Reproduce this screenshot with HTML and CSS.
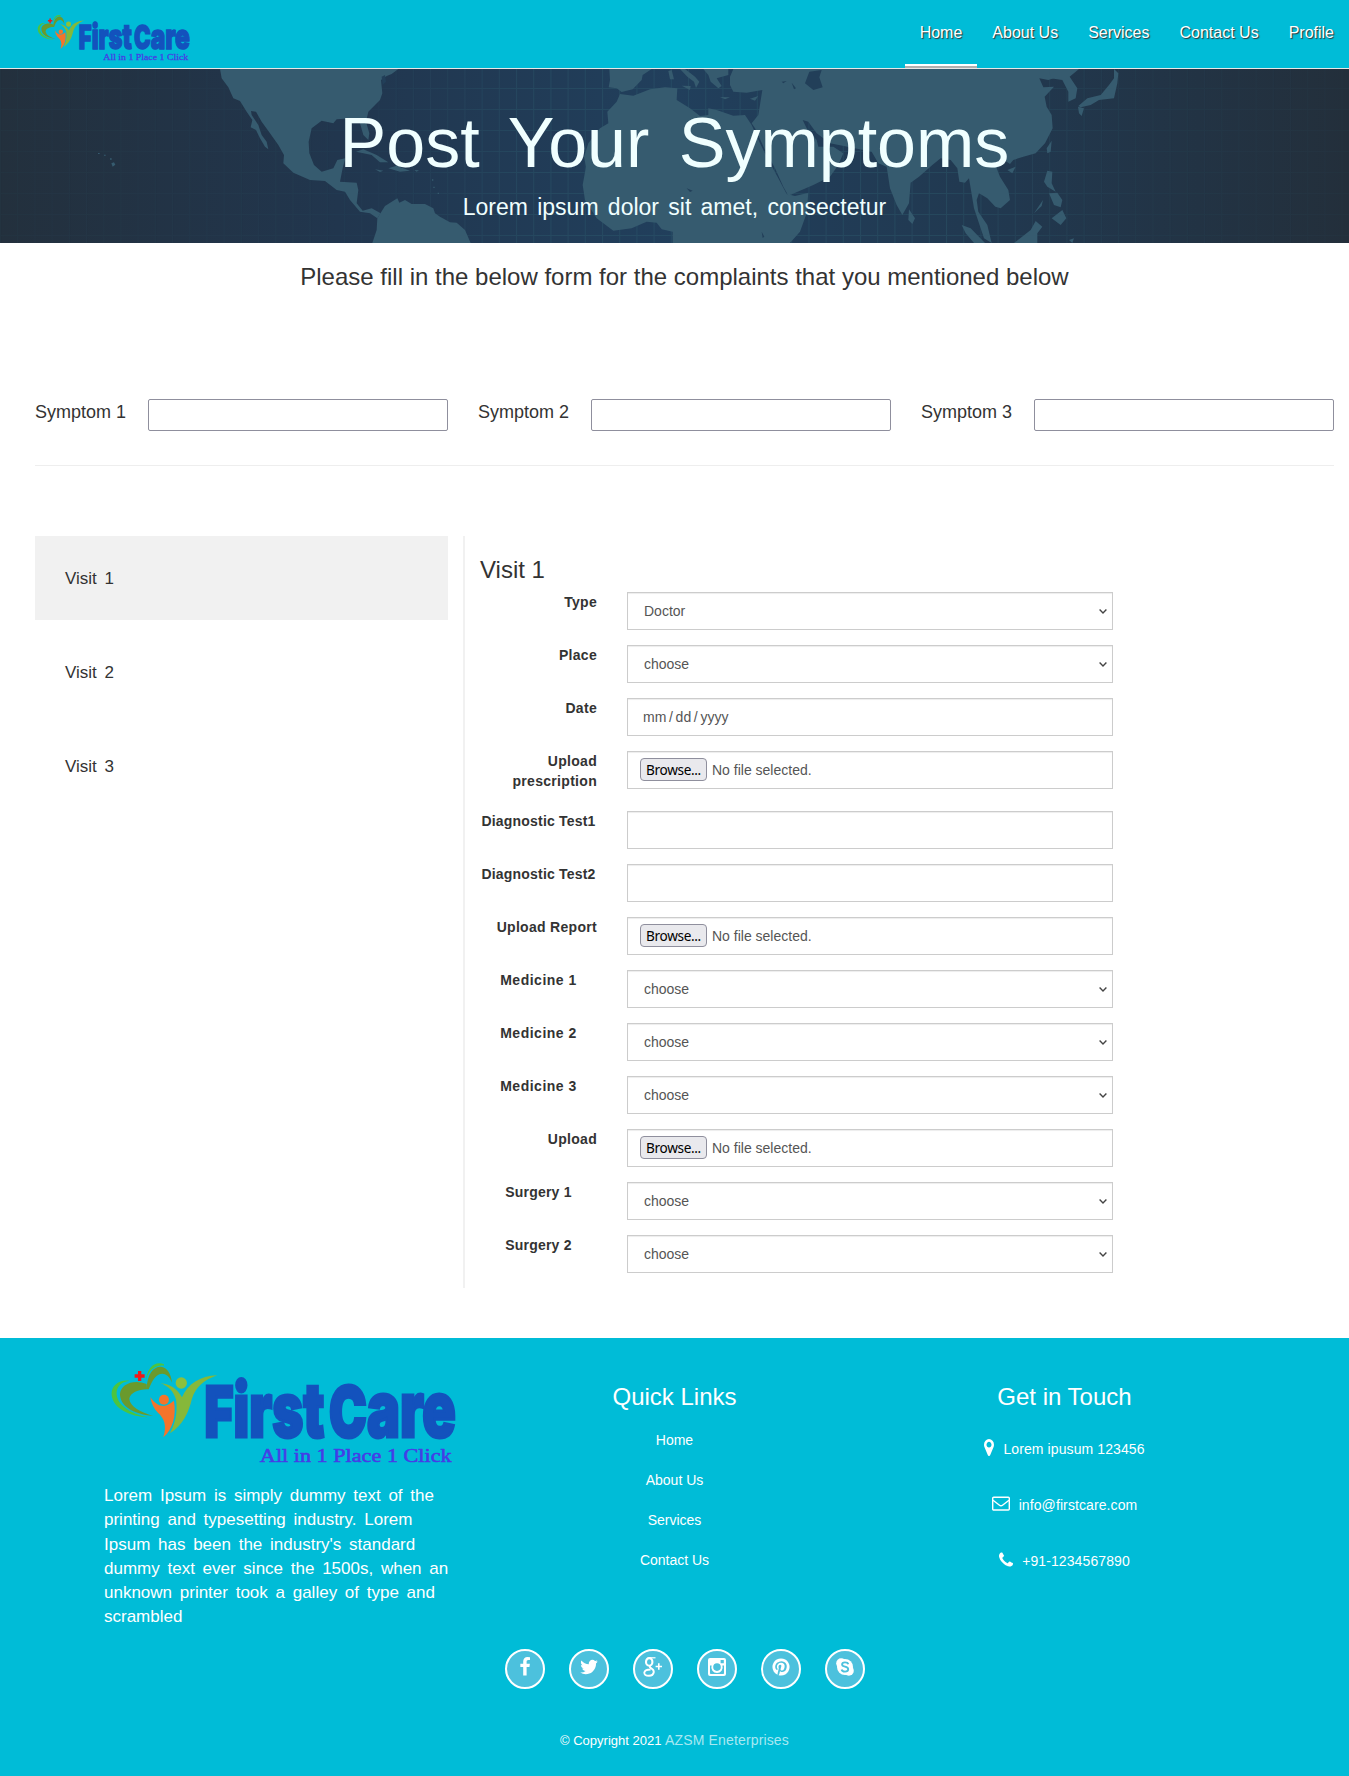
FILE: index.html
```html
<!DOCTYPE html>
<html lang="en">
<head>
<meta charset="utf-8">
<title>FirstCare - Post Your Symptoms</title>
<link rel="stylesheet" href="styles.css">
</head>
<body>
<svg class="defs" width="0" height="0" aria-hidden="true">
  <symbol id="logo" viewBox="60 35 1045 315" preserveAspectRatio="none">
    <path fill="#4cc43f" d="M222 45C195 34 172 55 168 92C176 62 196 46 222 49ZM118 94C84 90 62 112 65 138C70 178 120 202 174 204C120 192 84 168 80 136C78 114 92 98 118 94Z"/>
    <path fill="#6a9a2d" d="M170 118C172 74 190 52 212 52C232 53 244 74 246 100C234 72 216 68 200 80C186 92 182 108 176 120C150 118 120 130 118 148C120 172 152 188 190 200C126 194 90 168 90 134C92 104 132 88 170 104Z"/>
    <path fill="#86b83a" d="M212 102C240 104 262 118 276 144C294 104 330 80 382 78C340 92 318 114 306 148C296 190 280 226 240 252C262 210 262 176 258 150C250 124 234 110 212 102Z"/>
    <circle cx="274" cy="101" r="17" fill="#8cc03c"/>
    <path fill="#f4742b" d="M181 143C192 160 206 170 222 170C234 168 244 160 252 154C260 200 248 240 220 264C232 228 222 206 204 190C192 178 184 162 181 143Z"/>
    <circle cx="222" cy="151" r="15" fill="#f4742b"/>
    <path fill="#f01818" d="M144 65h10v10h10v10h-10v10h-10v-10h-10v-10h10z"/>
    <g class="logo-name">
      <text x="344" y="264" textLength="360" lengthAdjust="spacingAndGlyphs"><tspan font-size="212">F</tspan><tspan font-size="226">irst</tspan></text>
      <text x="718" y="264" textLength="380" lengthAdjust="spacingAndGlyphs"><tspan font-size="212">C</tspan><tspan font-size="232">are</tspan></text>
    </g>
    <text class="logo-tag" x="510" y="338" font-size="58" textLength="576" lengthAdjust="spacingAndGlyphs">All in 1 Place 1 Click</text>
  </symbol>
  <symbol id="chevron" viewBox="0 0 8 5"><path d="M0.6 0.6L4 4L7.4 0.6" fill="none" stroke="#444" stroke-width="1.4"/></symbol>
</svg>

<header class="topbar">
  <svg class="topbar-logo"><use href="#logo"/></svg>
  <nav class="nav">
    <a class="active">Home</a><a>About Us</a><a>Services</a><a>Contact Us</a><a>Profile</a>
  </nav>
</header>

<section class="banner">
  <svg class="map" viewBox="0 69 1349 174" preserveAspectRatio="none" aria-hidden="true">
    <defs>
      <linearGradient id="sea" x1="0" x2="1" y1="0" y2="0">
        <stop offset="0" stop-color="#23303d"/><stop offset=".25" stop-color="#21364e"/><stop offset=".5" stop-color="#213f5c"/><stop offset=".75" stop-color="#21384f"/><stop offset="1" stop-color="#232f3b"/>
      </linearGradient>
      <pattern id="grid" width="17.2" height="21" y="4" patternUnits="userSpaceOnUse">
        <path d="M.5 0V21M0 .5H17.2" stroke="#2e6273" stroke-opacity=".36"/>
      </pattern>
      <linearGradient id="fade" x1="0" x2="1" y1="0" y2="0">
        <stop offset="0" stop-color="#333"/><stop offset=".28" stop-color="#444"/><stop offset=".4" stop-color="#fff"/><stop offset=".7" stop-color="#fff"/><stop offset=".85" stop-color="#444"/><stop offset="1" stop-color="#333"/>
      </linearGradient>
      <mask id="gridMask"><rect y="69" width="1349" height="174" fill="url(#fade)"/></mask>
    </defs>
    <rect y="69" width="1349" height="174" fill="url(#sea)"/>
    <rect y="69" width="1349" height="174" fill="url(#grid)" mask="url(#gridMask)"/>
    <g fill="#365b6f">
      <g transform="scale(.33333)">
        <path d="M660 207L665 235L685 262L700 295L720 303L740 335L757 360L752 382L768 390L780 415L795 440L805 448L800 425L785 405L775 375L755 345L753 333L768 335L785 365L810 400L835 435L852 465L850 490L880 518L930 540L975 543L1010 570L1035 575L1050 600L1080 635L1110 640L1132 655L1142 640L1115 625L1088 632L1070 610L1075 570L1070 548L1020 545L1028 505L1036 475L1012 480L1000 505L965 515L942 495L928 460L926 425L935 385L965 362L1000 370L1010 358L1060 355L1080 370L1090 405L1105 420L1108 400L1098 365L1105 335L1140 300L1147 280L1143 240L1160 228L1175 222L1195 207Z"/>
        <path d="M1132 655L1155 618L1192 595L1198 608L1215 600L1235 612L1275 612L1300 625L1305 640L1320 650L1350 667L1370 668L1395 690L1412 729L1117 729L1130 690Z"/>
        <path d="M1068 455L1090 448L1130 465L1165 487L1140 487L1115 465L1090 460ZM1165 505L1190 497L1230 512L1200 515ZM1125 508L1150 512L1140 516ZM1243 510L1257 511L1250 515Z"/>
        <path d="M334 490L342 487L346 494L338 500ZM294 459h5v3h-5zM312 464h5v3h-5zM330 475h5v4h-5zM1296 538h4v4h-4zM1300 560h4v4h-4zM1313 578h4v4h-4z"/>
      </g>
      <g transform="translate(450 0) scale(.33333)">
        <path d="M478 207L480 240L476 262L500 265L515 276L548 268L575 240L578 225L605 207ZM690 207L712 230L732 245L738 264L748 245L735 230L705 207ZM760 207L775 225L782 245L805 265L815 258L800 235L835 225L835 207ZM695 257L722 258L720 270ZM655 213L665 210L672 238L660 238ZM810 291L840 292L825 298ZM900 296L925 288L915 302Z"/>
        <path d="M510 282L550 287L600 268L645 262L682 265L680 300L720 325L750 348L775 345L775 325L800 330L850 347L885 345L905 375L930 430L955 480L985 535L1010 582L1035 588L1075 578L1070 640L1050 695L1020 729L668 729L668 695L635 688L620 668L590 665L545 685L490 692L440 655L405 600L398 555L408 500L402 470L415 430L450 385L475 370L472 335L500 305Z"/>
        <path d="M840 230L850 207L1850 207L1820 232L1795 240L1768 235L1780 262L1812 260L1784 290L1790 320L1805 345L1808 385L1785 430L1757 460L1720 470L1690 480L1680 492L1662 480L1640 505L1650 530L1675 570L1680 600L1652 625L1636 620L1612 595L1587 580L1580 600L1585 635L1612 675L1625 729L1602 715L1587 670L1572 625L1557 535L1545 548L1528 545L1522 505L1502 480L1472 475L1447 495L1407 530L1382 548L1377 610L1357 645L1340 615L1320 565L1310 500L1285 490L1265 455L1200 442L1140 430L1100 400L1075 365L1058 360L1070 385L1100 420L1105 440L1150 440L1180 460L1165 495L1140 530L1090 555L1015 587L1000 560L975 505L945 450L915 385L905 370L925 345L937 270L890 278L850 275L840 255Z"/>
      </g>
      <g transform="translate(899 0) scale(.33333)">
        <path d="M450 207L540 207L512 230L535 265L530 295L508 305L508 275L490 240L455 235ZM645 207L658 220L655 250L645 295L600 300L575 315L545 322L538 318L565 295L605 285L630 255L645 235ZM537 320L555 325L548 348L540 340ZM458 422L455 455L445 460L443 445ZM445 512L460 515L458 550L470 575L445 560L435 545ZM458 655L490 630L502 655L485 675ZM450 580L475 578L490 600L485 622L465 615ZM325 510L350 500L340 520ZM345 729L395 690L410 663L430 680L415 700L415 729ZM188 675L215 685L258 729L225 729L200 700ZM30 628L48 655L40 672L28 660ZM405 640L432 600L428 618ZM510 720L525 715L520 729Z"/>
      </g>
    </g>
    <g fill="#223f59" transform="translate(450 0) scale(.33333)">
      <path d="M1078 215L1115 210L1108 232L1118 262L1090 270L1065 250ZM1025 248L1038 265L1032 268ZM995 245L1010 243L1000 250ZM710 565L728 572L720 576ZM935 695L943 710L938 714Z"/>
    </g>
    <g fill="#223f59" transform="scale(.33333)"><path d="M1145 230L1155 225L1158 245L1148 255Z"/></g>
  </svg>
  <div class="banner-text">
    <h1>Post Your Symptoms</h1>
    <p>Lorem ipsum dolor sit amet, consectetur</p>
  </div>
</section>

<main>
  <h2 class="intro">Please fill in the below form for the complaints that you mentioned below</h2>
  <div class="symptoms">
    <label class="symptom"><span>Symptom 1</span><input type="text"></label>
    <label class="symptom"><span>Symptom 2</span><input type="text"></label>
    <label class="symptom"><span>Symptom 3</span><input type="text"></label>
  </div>

  <div class="visits">
    <div class="tabs"><a class="active">Visit 1</a><a>Visit 2</a><a>Visit 3</a></div>
    <form class="visit">
      <h3>Visit 1</h3>
      <div class="row"><label>Type</label><div class="field"><select><option>Doctor</option></select><svg class="arrow"><use href="#chevron"/></svg></div></div>
      <div class="row"><label>Place</label><div class="field"><select><option>choose</option></select><svg class="arrow"><use href="#chevron"/></svg></div></div>
      <div class="row"><label>Date</label><div class="field date"><span>mm / dd / yyyy</span></div></div>
      <div class="row"><label>Upload prescription</label><div class="field file"><span class="browse">Browse...</span><span>No file selected.</span></div></div>
      <div class="row"><label class="mid">Diagnostic Test1</label><div class="field"></div></div>
      <div class="row"><label class="mid">Diagnostic Test2</label><div class="field"></div></div>
      <div class="row"><label>Upload Report</label><div class="field file"><span class="browse">Browse...</span><span>No file selected.</span></div></div>
      <div class="row"><label class="mid wide">Medicine 1</label><div class="field"><select><option>choose</option></select><svg class="arrow"><use href="#chevron"/></svg></div></div>
      <div class="row"><label class="mid wide">Medicine 2</label><div class="field"><select><option>choose</option></select><svg class="arrow"><use href="#chevron"/></svg></div></div>
      <div class="row"><label class="mid wide">Medicine 3</label><div class="field"><select><option>choose</option></select><svg class="arrow"><use href="#chevron"/></svg></div></div>
      <div class="row"><label>Upload</label><div class="field file"><span class="browse">Browse...</span><span>No file selected.</span></div></div>
      <div class="row"><label class="mid">Surgery 1</label><div class="field"><select><option>choose</option></select><svg class="arrow"><use href="#chevron"/></svg></div></div>
      <div class="row"><label class="mid">Surgery 2</label><div class="field"><select><option>choose</option></select><svg class="arrow"><use href="#chevron"/></svg></div></div>
    </form>
  </div>
</main>

<footer>
  <div class="foot-cols">
    <div class="about">
      <svg class="foot-logo"><use href="#logo"/></svg>
      <p>Lorem Ipsum is simply dummy text of the printing and typesetting industry. Lorem Ipsum has been the industry's standard dummy text ever since the 1500s, when an unknown printer took a galley of type and scrambled</p>
    </div>
    <div class="links">
      <h3>Quick Links</h3>
      <a>Home</a><a>About Us</a><a>Services</a><a>Contact Us</a>
    </div>
    <div class="touch">
      <h3>Get in Touch</h3>
      <p><svg width="10" height="17" viewBox="384 128 1024 1536" preserveAspectRatio="none"><path fill="#fff" d="M1152 640q0-106-75-181t-181-75-181 75-75 181 75 181 181 75 181-75 75-181zm256 0q0 109-33 179l-364 774q-16 33-47.5 52t-67.5 19-67.5-19-46.5-52l-365-774q-33-70-33-179 0-212 150-362t362-150 362 150 150 362z"/></svg><span>Lorem ipusum 123456</span></p>
      <p><svg width="18" height="15" viewBox="0 0 18 15"><rect x=".7" y="1.2" width="16.6" height="12.8" rx="1" fill="none" stroke="#fff" stroke-width="1.4"/><path d="M1 4.2L7.2 9Q9 10.4 10.8 9L17 4.2" fill="none" stroke="#fff" stroke-width="1.4"/></svg><span>info@firstcare.com</span></p>
      <p><svg width="14" height="15" viewBox="192 128 1408 1408"><path fill="#fff" d="M1600 1240q0 27-10 70.5t-21 68.5q-21 50-122 106-94 51-186 51-27 0-53-3.5t-57.5-12.5-47-14.5-55.5-20.5-49-18q-98-35-175-83-127-79-264-216t-216-264q-48-77-83-175-3-9-18-49t-20.5-55.5-14.5-47-12.5-57.5-3.5-53q0-92 51-186 56-101 106-122 25-11 68.5-21t70.5-10q14 0 21 3 18 6 53 76 11 19 30 54t35 63.5 31 53.5q3 4 17.5 25t21.5 35.5 7 28.5q0 20-28.5 50t-62 55-62 53-28.5 46q0 9 5 22.5t8.5 20.5 14 24 11.5 19q76 137 174 235t235 174q2 1 19 11.5t24 14 20.5 8.5 22.5 5q18 0 46-28.5t53-62 55-62 50-28.5q14 0 28.5 7t35.5 21.5 25 17.5q25 15 53.5 31t63.5 35 54 30q70 35 76 53 3 7 3 21z"/></svg><span>+91-1234567890</span></p>
    </div>
  </div>
  <div class="social">
    <a><svg viewBox="0 0 1792 1792"><path d="M1343 12v264h-157q-86 0-116 36t-30 108v189h293l-39 296h-254v759h-306v-759h-255v-296h255v-218q0-186 104-288.5t277-102.5q147 0 228 12z"/></svg></a>
    <a><svg viewBox="0 0 1792 1792"><path d="M1684 408q-67 98-162 167 1 14 1 42 0 130-38 259.5t-115.5 248.5-184.5 210.5-258 146-323 54.5q-271 0-496-145 35 4 78 4 225 0 401-138-105-2-188-64.5t-114-159.5q33 5 61 5 43 0 85-11-112-23-185.5-111.5t-73.5-205.5v-4q68 38 146 41-66-44-105-115t-39-154q0-88 44-163 121 149 294.5 238.5t371.5 99.5q-8-38-8-74 0-134 94.5-228.5t228.5-94.5q140 0 236 102 109-21 205-78-37 115-142 178 93-10 186-50z"/></svg></a>
    <a><svg viewBox="0 0 20 20"><g fill="none" stroke="#fff"><ellipse cx="6.2" cy="4.9" rx="3.2" ry="3.8" stroke-width="2.1"/><path d="M5.5 .8H12.5" stroke-width="1.2"/><path d="M7.4 8.7Q5.8 10 8.2 11.2Q10.9 12.8 10.8 15Q10.2 18.8 5.9 18.8Q1.2 18.7 1.3 15.6Q1.8 12.5 7.6 12.5" stroke-width="1.9"/><path d="M12.6 9.5H19M15.8 6.3V12.7" stroke-width="1.6"/></g></svg></a>
    <a><svg viewBox="0 0 20 20"><path fill-rule="evenodd" d="M3 1h14a2 2 0 0 1 2 2v14a2 2 0 0 1-2 2H3a2 2 0 0 1-2-2V3a2 2 0 0 1 2-2zM13.6 3v3.2h3.2V3zM3 8.5V16.2q0 .8.8.8h12.4q.8 0 .8-.8V8.5h-1.6a5.7 5.7 0 1 1-10.8 0zM10 6.3a3.8 3.8 0 1 0 0 7.6a3.8 3.8 0 1 0 0-7.6z"/></svg></a>
    <a><svg viewBox="0 0 1792 1792"><path d="M1664 896q0 209-103 385.5t-279.5 279.5-385.5 103q-111 0-218-32 59-93 78-164 9-34 54-211 20 39 73 67.5t114 28.5q121 0 216-68.5t147-188.5 52-270q0-114-59.5-214t-172.5-163-255-63q-105 0-196 29t-154.5 77-109 110.5-67 129.5-21.5 134q0 104 40 183t117 111q30 12 38-20 2-7 8-31t8-30q6-23-11-43-51-61-51-151 0-151 104.5-259.5t273.5-108.5q151 0 235.5 82t84.5 213q0 170-68.5 289t-175.5 119q-61 0-98-43.5t-23-104.5q8-35 26.5-93.5t30-103 11.5-75.5q0-50-27-83t-77-33q-62 0-105 57t-43 142q0 73 25 122l-99 418q-17 70-13 177-206-91-333-281t-127-423q0-209 103-385.5t279.5-279.5 385.5-103 385.5 103 279.5 279.5 103 385.5z"/></svg></a>
    <a><svg viewBox="0 0 20 20"><circle cx="10" cy="10" r="8"/><circle cx="6.2" cy="6.2" r="5"/><circle cx="13.8" cy="13.8" r="5"/><path d="M13.3 7.2Q12.8 5.4 10 5.4Q7.1 5.4 7.1 7.5Q7.1 9 10 9.7Q13.2 10.4 13.2 12.3Q13.1 14.6 10 14.6Q7 14.5 6.6 12.5" fill="none" stroke="#4cc1dd" stroke-width="1.9"/></svg></a>
  </div>
  <p class="copy">© Copyright 2021 <a>AZSM Eneterprises</a></p>
</footer>
</body>
</html>
```
FILE: styles.css
```css
* { box-sizing: border-box; }
body {
  margin: 0;
  font: 14px/20px "Liberation Sans", Arial, sans-serif;
  color: #333;
  background: #fff;
}
h1, h2, h3, p { margin: 0; font-weight: 400; }
.defs { display: block; height: 0; }

.logo-name { font-family: Inter, sans-serif; font-weight: 900; fill: #1352bd; stroke: #1352bd; stroke-width: 9; }
.logo-tag { font-family: "Liberation Serif", serif; fill: #453de6; stroke: #453de6; stroke-width: 1.8; }

.topbar {
  display: flex;
  justify-content: space-between;
  align-items: flex-start;
  height: 69px;
  padding-left: 37px;
  background: #00bcd7;
  border-bottom: 1px solid #e7e7e7;
}
.topbar-logo { width: 154px; height: 48px; margin-top: 14px; }
.nav { display: flex; height: 68px; }
.nav a {
  padding: 22px 15px 0;
  font-size: 16px;
  line-height: 22px;
  color: #fff;
  text-shadow: 1px 1px 1px #333;
}
.nav .active { border-bottom: 2px solid #b0b0b0; box-shadow: inset 0 -2px #fff; }

.banner { display: grid; height: 174px; overflow: hidden; }
.banner > * { grid-area: 1 / 1; }
.map { width: 100%; height: 174px; display: block; }
.banner-text { text-align: center; color: azure; z-index: 1; }
.banner-text h1 { margin-top: 36px; font-size: 70px; line-height: 77px; word-spacing: 10px; }
.banner-text p { margin-top: 9px; font-size: 23px; line-height: 32px; word-spacing: 2.9px; }

.intro { padding: 20px 0 0 20px; text-align: center; font-size: 24px; line-height: 28px; }
.symptoms {
  display: grid;
  grid-template-columns: repeat(3, 413px);
  gap: 30px;
  margin: 108px 15px 0 35px;
  padding-bottom: 34px;
  border-bottom: 1px solid #eee;
}
.symptom { display: flex; justify-content: space-between; font-size: 18px; line-height: 26px; }
.symptom input { width: 300px; height: 32px; border: 1px solid #8f8f9d; border-radius: 2px; background: #fff; }

.visits { display: grid; grid-template-columns: 413px 1fr; column-gap: 15px; margin: 70px 15px 50px 35px; }
.tabs { display: flex; flex-direction: column; gap: 10px; }
.tabs a { height: 84px; padding: 31px 30px 29px; font-size: 17px; line-height: 24px; word-spacing: 3px; }
.tabs .active { background: #f1f1f1; }
.visit { height: 752px; padding: 20px 0 0 15px; border-left: 2px solid #f1f1f1; }
.visit h3 { height: 36px; font-size: 24px; line-height: 27px; }
.row { display: grid; grid-template-columns: 117px 486px; column-gap: 30px; align-items: start; margin-bottom: 15px; }
.row label { padding-bottom: 5px; font-weight: 700; text-align: right; letter-spacing: .3px; }
.row label.mid { text-align: center; letter-spacing: .2px; white-space: nowrap; }
.row label.wide { letter-spacing: .5px; }
.field {
  display: flex;
  align-items: center;
  height: 38px;
  padding-left: 12px;
  border: 1px solid #ccc;
  box-shadow: inset 0 1px 1px rgba(0, 0, 0, .075);
  color: #555;
}
.field select {
  flex: 1;
  appearance: none;
  border: 0;
  padding: 0 4px;
  background: none;
  font: 14px/20px "Liberation Sans", Arial, sans-serif;
  color: #555;
}
.arrow { width: 8px; height: 5px; margin: 1px 5px 0 0; }
.date { padding-left: 15px; word-spacing: -1.2px; }
.file { gap: 5px; align-items: flex-start; padding-top: 6px; line-height: 24px; }
.browse {
  width: 67px;
  height: 23px;
  border: 1px solid #8f8f9d;
  border-radius: 4px;
  background: #e9e9ed;
  color: #000;
  text-align: center;
  font: 13.6px/22px "Noto Sans", sans-serif;
  letter-spacing: -.35px;
}

footer { height: 438px; padding-top: 23px; background: #00bcd7; color: #fff; }
.foot-cols { display: grid; grid-template-columns: 360px 390px 390px; padding-left: 104px; }
.about { width: 360px; }
.foot-logo { display: block; width: 348px; height: 105px; margin-left: 6px; }
.about p { width: 350px; margin-top: 18px; font-size: 17px; line-height: 24.28px; word-spacing: 3px; }
.links, .touch { display: flex; flex-direction: column; align-items: center; }
.links { margin-left: 31px; width: 359px; }
.touch { margin-left: 31px; width: 359px; }
.links h3, .touch h3 { margin-top: 22px; font-size: 24px; line-height: 28px; }
.links h3 { margin-bottom: 19px; }
.links a { line-height: 20px; margin-bottom: 20px; }
.touch h3 { margin-bottom: 28px; }
.touch p { display: flex; align-items: center; gap: 9px; height: 20px; margin-bottom: 36px; }
.touch p svg { margin-bottom: 3px; }
.touch p span { letter-spacing: .1px; }
.social { display: flex; gap: 24px; margin: 19px 0 0 505px; }
.social a {
  display: flex;
  align-items: center;
  justify-content: center;
  width: 40px;
  height: 40px;
  border: 2px solid #fff;
  border-radius: 50%;
  background: #4cc1dd;
}
.social svg { width: 20px; height: 20px; fill: #fff; margin-top: -3px; }
.copy { margin-top: 41px; text-align: center; font-size: 13px; }
.copy a { font-size: 14px; color: #a8e8f2; letter-spacing: .15px; }
```
